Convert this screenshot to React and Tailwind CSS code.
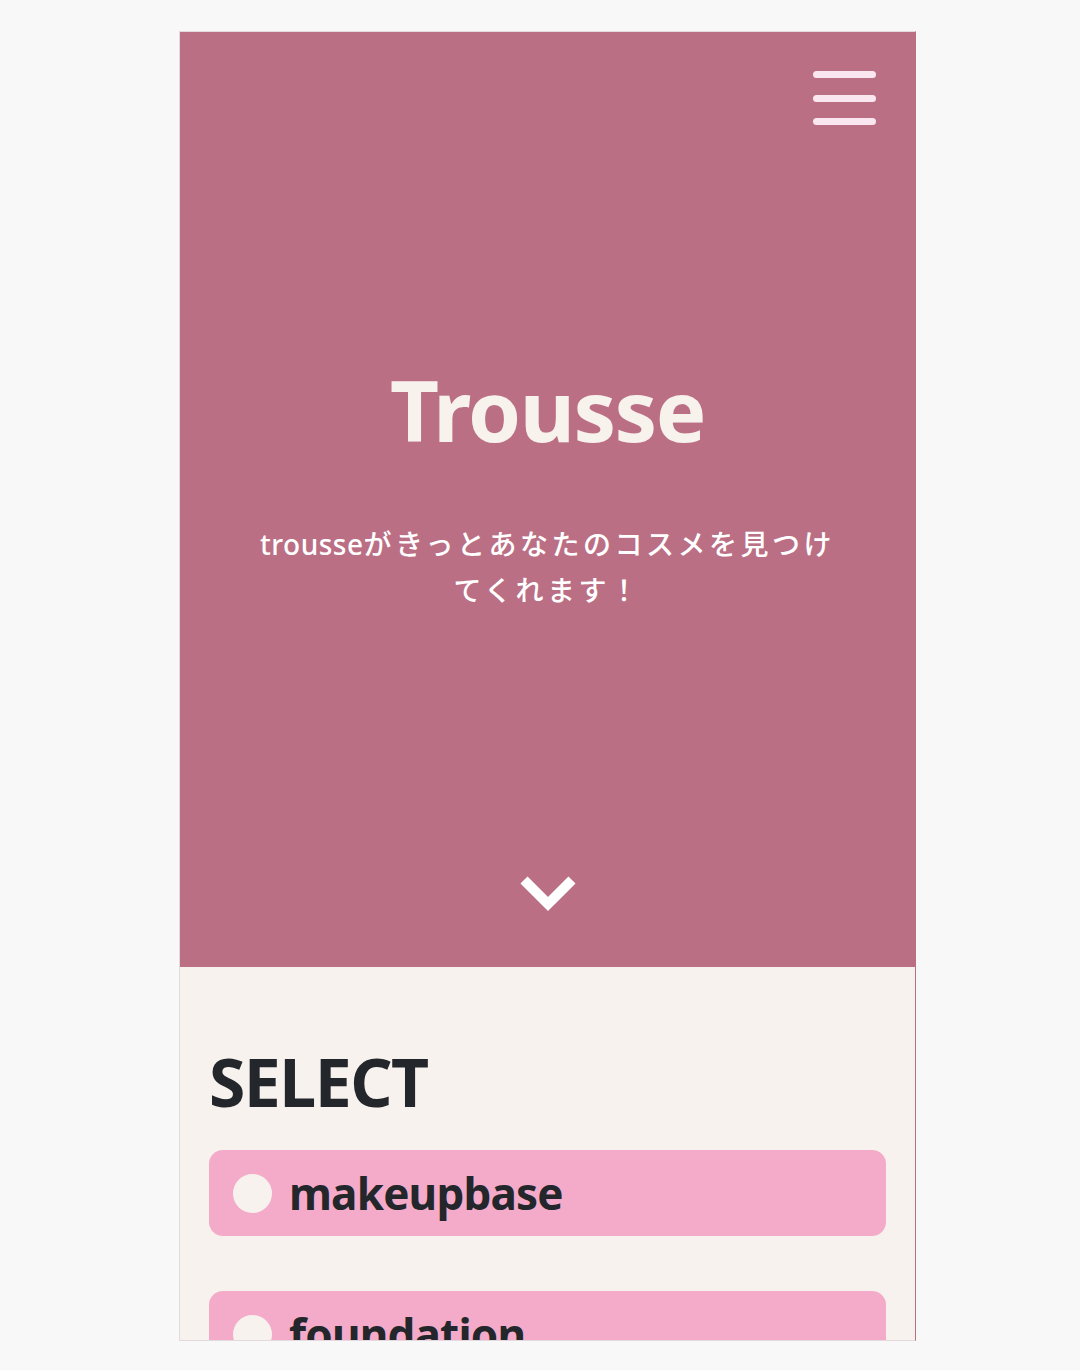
import React from "react";

const font = { fontFamily: '"Noto Sans", "Noto Sans CJK JP", sans-serif' };

function Item({ label }) {
  return (
    <div className="flex items-center h-[86px] rounded-[14px] bg-[#f4abc9] pl-[24px] shrink-0">
      <div className="w-[39px] h-[39px] rounded-full bg-[#f7f2ee]" />
      <span className="ml-[17px] text-[44px] font-bold leading-none text-[#23262b] tracking-[-0.8px]">
        {label}
      </span>
    </div>
  );
}

export default function App() {
  return (
    <div className="min-h-[1370px] w-[1080px] bg-[#f8f8f8] pt-[31px]" style={font}>
      <div className="ml-[179px] w-[737px] h-[1310px] overflow-hidden border-l border-t border-b border-[#e2dadd] border-r border-r-[#b86f82] flex flex-col">
        <header className="h-[935px] shrink-0 bg-[#bb6f85] flex flex-col items-center">
          <div className="self-stretch flex justify-end pt-[39px] pr-[39px]">
            <button className="flex flex-col gap-[16.5px]" aria-label="menu">
              <span className="block w-[63px] h-[7px] rounded-full bg-[#f9e6ee]" />
              <span className="block w-[63px] h-[7px] rounded-full bg-[#f9e6ee]" />
              <span className="block w-[63px] h-[7px] rounded-full bg-[#f9e6ee]" />
            </button>
          </div>
          <h1 className="mt-[242px] text-[85px] leading-none font-bold text-[#f8f2ed] tracking-[-1.5px]">
            Trousse
          </h1>
          <p className="mt-[69px] w-[596px] text-center text-[28px] leading-[46px] font-medium text-white tracking-[3.5px]">
            <span className="tracking-[0.5px]">trousse</span>がきっとあなたのコスメを見つけてくれます！
          </p>
          <div className="mt-auto mb-[54px]">
            <svg width="58" height="38" viewBox="0 0 58 38">
              <path d="M5 5 L29 29 L53 5" fill="none" stroke="#ffffff" strokeWidth="10" strokeLinecap="butt" strokeLinejoin="miter" />
            </svg>
          </div>
        </header>
        <section className="flex-1 bg-[#f7f2ee] px-[29px] pt-[81px] flex flex-col">
          <h2 className="text-[66px] leading-none font-bold text-[#23262b] tracking-[-1.5px]">SELECT</h2>
          <div className="mt-[36px] flex flex-col gap-[55px]">
            <Item label="makeupbase" />
            <Item label="foundation" />
          </div>
        </section>
      </div>
    </div>
  );
}
